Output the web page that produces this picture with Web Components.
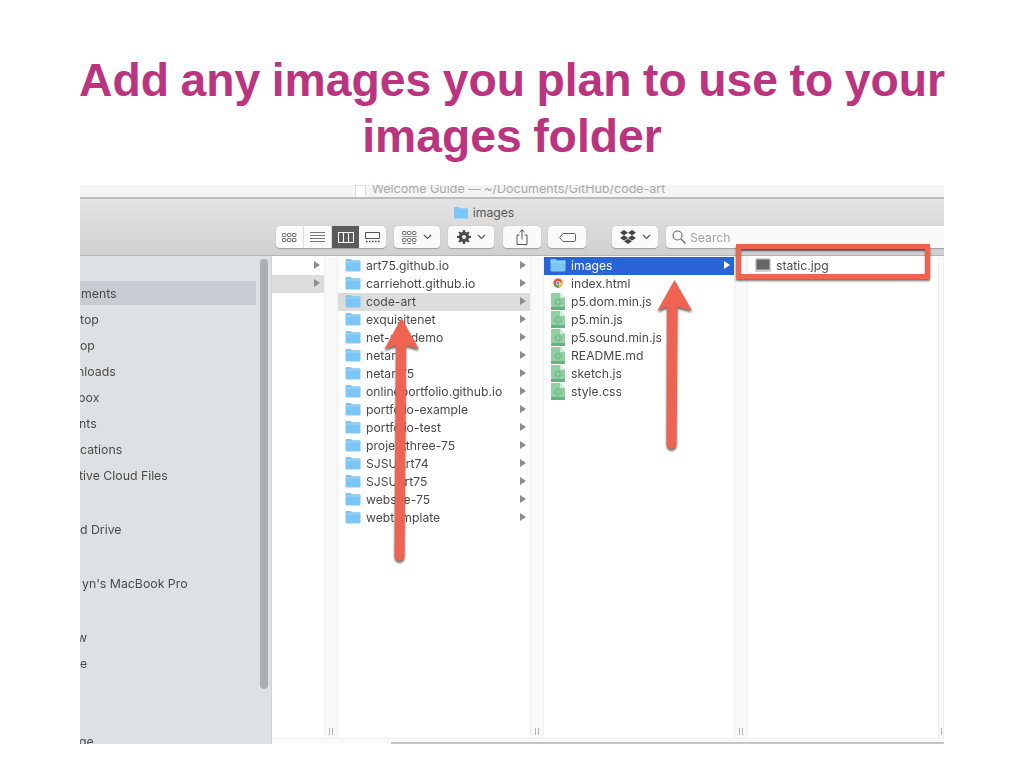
<!DOCTYPE html>
<html lang="en">
<head>
<meta charset="utf-8">
<title>Add any images</title>
<style>
  html, body { margin: 0; padding: 0; background: #fff; }
  body { width: 1024px; height: 768px; overflow: hidden; font-family: "Inter", "Liberation Sans", sans-serif; }
</style>
</head>
<body>
<slide-page>
  <slide-title slot="title">Add any images you plan to use to your images folder</slide-title>
  <finder-window>
    <finder-sidebar slot="sidebar">
      <side-item active pad="1">ments</side-item>
      <side-item pad="0">top</side-item>
      <side-item pad="0">op</side-item>
      <side-item pad="-3">nloads</side-item>
      <side-item pad="-2">box</side-item>
      <side-item pad="-1">nts</side-item>
      <side-item pad="0">cations</side-item>
      <side-item pad="-1">tive Cloud Files</side-item>
      <side-item gap="28" pad="0">d Drive</side-item>
      <side-item gap="28" pad="2">yn's MacBook Pro</side-item>
      <side-item gap="28" pad="-3">w</side-item>
      <side-item pad="0">e</side-item>
      <side-item gap="52" pad="-1">ge</side-item>
    </finder-sidebar>

    <finder-column slot="columns" size="52" divider="14">
      <finder-row arrow></finder-row>
      <finder-row arrow current></finder-row>
    </finder-column>
    <finder-column slot="columns" size="192" divider="14">
      <finder-row icon="folder" arrow>art75.github.io</finder-row>
      <finder-row icon="folder" arrow>carriehott.github.io</finder-row>
      <finder-row icon="folder" arrow current>code-art</finder-row>
      <finder-row icon="folder" arrow>exquisitenet</finder-row>
      <finder-row icon="folder" arrow>net-art-demo</finder-row>
      <finder-row icon="folder" arrow>netart</finder-row>
      <finder-row icon="folder" arrow>netart75</finder-row>
      <finder-row icon="folder" arrow>onlineportfolio.github.io</finder-row>
      <finder-row icon="folder" arrow>portfolio-example</finder-row>
      <finder-row icon="folder" arrow>portfolio-test</finder-row>
      <finder-row icon="folder" arrow>projectthree-75</finder-row>
      <finder-row icon="folder" arrow>SJSUArt74</finder-row>
      <finder-row icon="folder" arrow>SJSUart75</finder-row>
      <finder-row icon="folder" arrow>website-75</finder-row>
      <finder-row icon="folder" arrow>webtemplate</finder-row>
    </finder-column>
    <finder-column slot="columns" size="190" divider="14">
      <finder-row icon="folder" arrow selected indent="6">images</finder-row>
      <finder-row icon="chrome" indent="6">index.html</finder-row>
      <finder-row icon="code" indent="6">p5.dom.min.js</finder-row>
      <finder-row icon="code" indent="6">p5.min.js</finder-row>
      <finder-row icon="code" indent="6">p5.sound.min.js</finder-row>
      <finder-row icon="code" indent="6">README.md</finder-row>
      <finder-row icon="code" indent="6">sketch.js</finder-row>
      <finder-row icon="code" indent="6">style.css</finder-row>
    </finder-column>
    <finder-column slot="columns" size="190" divider="6">
      <finder-row icon="image" indent="7">static.jpg</finder-row>
    </finder-column>
  </finder-window>
</slide-page>

<script>
  const ICONS = {
    folder: `<svg width="16" height="14" viewBox="0 0 16 14"><path d="M.5 2.2C.5 1.4 1 1 1.7 1h3.6c.6 0 .8.2 1.1.6l.5.7h7.5c.7 0 1.1.4 1.1 1.1v8.9c0 .7-.4 1.2-1.1 1.2H1.6c-.7 0-1.1-.5-1.1-1.2z" fill="#7cc6f6"/><path d="M.5 3.6h15v.8H.5z" fill="#a8dafa"/></svg>`,
    chrome: `<svg width="16" height="16" viewBox="0 0 16 16"><rect x="0" y="0" width="16" height="16" rx="2" fill="#fafafa"/><circle cx="8" cy="8" r="4.6" fill="#e0523f"/><path d="M8 8 3.9 10a4.6 4.6 0 0 0 5.5 2.4z" fill="#5aa960"/><path d="M8 8l4.4-1.4a4.6 4.6 0 0 1-3 5.8z" fill="#efc63e"/><circle cx="8" cy="8" r="2.1" fill="#fff"/><circle cx="8" cy="8" r="1.5" fill="#4f86d8"/></svg>`,
    code: `<svg width="14" height="17" viewBox="0 0 14 17"><path d="M0 1c0-.6.4-1 1-1h8l5 5v11c0 .6-.4 1-1 1H1c-.6 0-1-.4-1-1z" fill="#93cfa4"/><path d="M9 0l5 5H9z" fill="#cfeAd6"/><path d="M0 14h14v2c0 .6-.4 1-1 1H1c-.6 0-1-.4-1-1z" fill="#66b380"/><ellipse cx="7" cy="9" rx="4.2" ry="2" fill="none" stroke="#6fb487" stroke-width=".7"/><ellipse cx="7" cy="9" rx="2" ry="4.2" fill="none" stroke="#6fb487" stroke-width=".7"/></svg>`,
    image: `<svg width="16" height="14" viewBox="0 0 16 14"><rect width="16" height="14" rx="1.5" fill="#cfcfcf"/><rect x="1.5" y="1.5" width="13" height="10" fill="#666"/></svg>`
  };

  class SlidePage extends HTMLElement {
    constructor() {
      super();
      this.attachShadow({ mode: 'open' });
      this.shadowRoot.innerHTML = `
        <style>
          :host { display: flex; flex-direction: column; width: 1024px; height: 768px; padding: 52px 80px 0; box-sizing: border-box; position: relative; }
          #gap { height: 21px; flex: none; }
          svg { position: absolute; left: 0; top: 0; pointer-events: none; filter: drop-shadow(0 2px 1.2px rgba(0,0,0,.6)); }
          #box { position: absolute; left: 736px; top: 244px; width: 184px; height: 25px; border: 5px solid #ee6352; box-shadow: 0 2px 2px rgba(0,0,0,.55), inset 0 2px 2px rgba(0,0,0,.6); }
        </style>
        <slot name="title"></slot>
        <div id="gap"></div>
        <slot></slot>
        <svg width="1024" height="768">
          <path d="M401.5 318 419 349 406 345.5 404.5 556a4.5 4.5 0 0 1-10 0L396 345.5 384.5 349z" fill="#ee6352"/>
          <path d="M674.5 280 692 310.5 677.5 307 676.5 444a4.5 4.5 0 0 1-10 0L667 307 657.5 310.5z" fill="#ee6352"/>
        </svg>
        <div id="box"></div>
      `;
    }
  }

  class SlideTitle extends HTMLElement {
    constructor() {
      super();
      this.attachShadow({ mode: 'open' });
      this.shadowRoot.innerHTML = `
        <style>
          :host { display: block; margin: 0 -30px; font: bold 46.3px/56px "Liberation Sans", Arial, sans-serif; word-spacing: -1.4px; color: #bb3480; text-align: center; }
        </style>
        <slot></slot>
      `;
    }
  }

  class FinderWindow extends HTMLElement {
    constructor() {
      super();
      this.attachShadow({ mode: 'open' });
      this.shadowRoot.innerHTML = `
        <style>
          :host { display: flex; flex-direction: column; width: 864px; height: 559px; overflow: hidden; flex: none; filter: blur(.55px); font: 12.2px "Inter", "Liberation Sans", sans-serif; color: #484848; }
          #body { display: flex; flex: 1; min-height: 0; }
          #columns { display: flex; flex-direction: column; flex: 1; min-width: 0; }
          #list { display: flex; flex: 1; min-height: 0; padding-top: 1px; background: #fff; }
          #hscroll { height: 6px; flex: none; box-sizing: border-box; border-top: 1px solid #f0f0f0; background: #fafafa; padding: 3px 0 0 119px; }
          #hscroll div { height: 2px; background: #c6c6c6; }
        </style>
        <finder-toolbar></finder-toolbar>
        <div id="body">
          <slot name="sidebar"></slot>
          <div id="columns">
            <div id="list"><slot name="columns"></slot></div>
            <div id="hscroll"><div></div></div>
          </div>
        </div>
      `;
    }
  }

  class FinderToolbar extends HTMLElement {
    constructor() {
      super();
      this.attachShadow({ mode: 'open' });
      const dot = (x, y) => `<rect x="${x}" y="${y}" width="3.4" height="3" rx=".5" fill="none" stroke="#555" stroke-width=".8"/>`;
      const grid = [0, 5, 10].flatMap(x => [0, 5].map(y => dot(x + .5, y + .5))).join('');
      const chevron = `<svg class="chev" width="9" height="6" viewBox="0 0 9 6"><path d="M1 1l3.5 3.5L8 1" fill="none" stroke="#555" stroke-width="1.2"/></svg>`;
      this.shadowRoot.innerHTML = `
        <style>
          :host { display: block; flex: none; height: 71px; box-sizing: border-box; border-bottom: 1px solid #b4b4b4; background: linear-gradient(#eeeeee, #e4e4e4 20%, #d0d0d0); }
          #tab { height: 14px; box-sizing: border-box; background: #f4f4f4; border-bottom: 2px solid #bcbcbc; display: flex; justify-content: center; gap: 6px; align-items: center; color: #a9a9a9; font-size: 12.5px; overflow: hidden; line-height: 14px; padding-right: 4px; }
          #tab i { display: block; width: 11px; height: 13px; background: #fff; border: 1px solid #dedede; box-sizing: border-box; flex: none; }
          #tab span { position: relative; top: -2px; }
          #name { height: 27px; display: flex; align-items: center; justify-content: center; gap: 4px; color: #555; padding-right: 57px; }
          #bar { display: flex; align-items: center; height: 22px; padding-left: 196px; }
          .btn { height: 22px; box-sizing: border-box; background: #fafafa; border-radius: 4px; box-shadow: 0 .5px 1px rgba(0,0,0,.25); display: flex; align-items: center; justify-content: center; gap: 6px; flex: none; }
          .seg { display: flex; overflow: hidden; width: 110px; margin-right: 8px; gap: 0; }
          .seg div { flex: 1; height: 22px; display: flex; align-items: center; justify-content: center; border-right: 1px solid #dcdcdc; box-sizing: border-box; }
          .seg div:last-child { border-right: 0; }
          .seg .on { background: #5b5b5b; border-right: 0; }
          #arrange { width: 46px; margin-right: 8px; }
          #action { width: 46px; margin-right: 9px; }
          #share { width: 38px; margin-right: 7px; }
          #tag { width: 38px; margin-right: 26px; }
          #drop { width: 46px; margin-right: 8px; }
          #search { flex: 1; justify-content: flex-start; padding-left: 6px; color: #a3a3a3; gap: 4px; border-radius: 4px 0 0 4px; }
        </style>
        <div id="tab"><i></i><span>Welcome Guide — ~/Documents/GitHub/code-art</span></div>
        <div id="name">
          <svg width="16" height="13" viewBox="0 0 16 14"><path d="M.5 2.2C.5 1.4 1 1 1.7 1h3.6c.6 0 .8.2 1.1.6l.5.7h7.5c.7 0 1.1.4 1.1 1.1v8.9c0 .7-.4 1.2-1.1 1.2H1.6c-.7 0-1.1-.5-1.1-1.2z" fill="#7cc6f6"/></svg>
          <span>images</span>
        </div>
        <div id="bar">
          <div class="btn seg">
            <div><svg width="15" height="9" viewBox="0 0 15 9">${grid}</svg></div>
            <div><svg width="15" height="11" viewBox="0 0 15 11"><path d="M0 .5h15M0 3.5h15M0 6.5h15M0 9.5h15" stroke="#666" stroke-width=".9"/></svg></div>
            <div class="on"><svg width="16" height="11" viewBox="0 0 16 11"><path d="M.5.5h15v10H.5zM5.5.5v10M10.5.5v10" fill="none" stroke="#fff" stroke-width="1.1"/></svg></div>
            <div><svg width="15" height="11" viewBox="0 0 15 11"><path d="M.5.5h14v6H.5z" fill="none" stroke="#555"/><path d="M1 9.5h1.6M4 9.5h1.6M7 9.5h1.6M10 9.5h1.6M13 9.5h1.6" stroke="#555" stroke-width="1.4"/></svg></div>
          </div>
          <div class="btn" id="arrange"><svg width="15" height="13" viewBox="0 0 15 13">${[0, 5, 10].map(x => dot(x + .5, .5)).join('')}<path d="M0 5.5h15" stroke="#777" stroke-width=".8"/><g transform="translate(0 7)">${grid}</g></svg>${chevron}</div>
          <div class="btn" id="action"><svg width="14" height="14" viewBox="0 0 14 14"><path d="M6 0h2l.3 2 1.4.6L11.4 1.4l1.2 1.2-1.2 1.7.6 1.4 2 .3v2l-2 .3-.6 1.4 1.2 1.7-1.2 1.2-1.7-1.2-1.4.6-.3 2H6l-.3-2-1.4-.6-1.7 1.2-1.2-1.2 1.2-1.7L2 8.3 0 8V6l2-.3.6-1.4-1.2-1.7 1.2-1.2 1.7 1.2 1.4-.6z" fill="#4c4c4c"/><circle cx="7" cy="7" r="2" fill="#f5f5f5"/></svg>${chevron}</div>
          <div class="btn" id="share"><svg width="12" height="16" viewBox="0 0 12 16"><path d="M3.5 6H1v9.5h10V6H8.5M6 10.5V1M3.5 3.2 6 .8l2.500 2.400" fill="none" stroke="#555" stroke-width="1"/></svg></div>
          <div class="btn" id="tag"><svg width="17" height="9" viewBox="0 0 17 9"><path d="M4 .5h11.5c.6 0 1 .4 1 1v6c0 .6-.4 1-1 1H4L.7 4.5z" fill="none" stroke="#666"/></svg></div>
          <div class="btn" id="drop"><svg width="16" height="14" viewBox="0 0 16 14"><path d="M4 0 0 2.7l4 2.6 4-2.600zM12 0 8 2.7l4 2.6 4-2.600zM0 7.900l4 2.600 4-2.600-4-2.600zM12 5.300 8 7.900l4 2.600 4-2.600zM4 11.300l4 2.700 4-2.700-4-2.600z" fill="#444"/></svg>${chevron}</div>
          <div class="btn" id="search"><svg width="14" height="14" viewBox="0 0 14 14"><circle cx="5.5" cy="5.5" r="4.5" fill="none" stroke="#666" stroke-width="1.1"/><path d="M9 9l4.500 4.500" stroke="#666" stroke-width="1.3"/></svg><span>Search</span></div>
        </div>
      `;
    }
  }

  class FinderSidebar extends HTMLElement {
    constructor() {
      super();
      this.attachShadow({ mode: 'open' });
      this.shadowRoot.innerHTML = `
        <style>
          :host { display: flex; flex: none; width: 192px; box-sizing: border-box; background: #dde1e4; border-right: 1px solid #cfd2d4; position: relative; overflow: hidden; }
          #items { flex: 1; padding-top: 25px; min-width: 0; }
          #track { width: 15px; flex: none; padding: 3px 3px 0 4px; box-sizing: border-box; }
          #thumb { height: 430px; background: #a9afb2; border-radius: 4px; }
        </style>
        <div id="items"><slot></slot></div>
        <div id="track"><div id="thumb"></div></div>
      `;
    }
  }

  class SideItem extends HTMLElement {
    constructor() {
      super();
      this.attachShadow({ mode: 'open' });
      this.shadowRoot.innerHTML = `
        <style>
          :host { display: block; height: 26px; line-height: 25px; white-space: nowrap; color: #4a4a4a; font-size: 12.3px; }
          :host([active]) { background: #c8cdd4; height: 24px; line-height: 26px; margin-bottom: 2px; }
        </style>
        <slot></slot>
      `;
    }
    connectedCallback() {
      this.style.marginTop = (this.getAttribute('gap') || 0) + 'px';
      const pad = Number(this.getAttribute('pad') || 0);
      if (pad < 0) this.style.marginLeft = pad + 'px';
      else this.style.paddingLeft = pad + 'px';
    }
  }

  class FinderColumn extends HTMLElement {
    constructor() {
      super();
      this.attachShadow({ mode: 'open' });
      this.shadowRoot.innerHTML = `
        <style>
          :host { display: flex; flex: none; }
          #rows { flex: 1; min-width: 0; }
          #handle { flex: none; box-sizing: border-box; background: #f9f9f9; border-left: 1px solid #efefef; border-right: 1px solid #efefef; display: flex; align-items: flex-end; justify-content: center; padding-bottom: 3px; gap: 2px; }
          #handle i { display: block; width: 1px; height: 7px; background: #b5b5b5; }
        </style>
        <div id="rows"><slot></slot></div>
        <div id="handle"><i></i><i></i></div>
      `;
    }
    connectedCallback() {
      const divider = Number(this.getAttribute('divider'));
      this.style.width = (Number(this.getAttribute('size')) + divider) + 'px';
      this.shadowRoot.querySelector('#handle').style.width = divider + 'px';
      if (divider < 10) this.shadowRoot.querySelector('#handle').innerHTML = '<i></i>';
    }
  }

  class FinderRow extends HTMLElement {
    constructor() {
      super();
      this.attachShadow({ mode: 'open' });
      this.shadowRoot.innerHTML = `
        <style>
          :host { display: flex; align-items: center; height: 18px; padding: 0 4px 0 7px; box-sizing: border-box; white-space: nowrap; color: #4a4a4a; }
          :host([current]) { background: #dcdcdc; }
          :host([selected]) { background: #2a62d8; color: #fff; }
          #icon { width: 16px; height: 18px; display: flex; align-items: center; justify-content: center; flex: none; margin-right: 5px; position: relative; top: -1px; }
          #label { flex: 1; min-width: 0; position: relative; top: -1px; }
          #arrow { width: 0; height: 0; border-left: 6px solid #8c8c8c; border-top: 4px solid transparent; border-bottom: 4px solid transparent; flex: none; display: none; position: relative; top: -1px; }
          :host([arrow]) #arrow { display: block; }
          :host([selected]) #arrow { border-left-color: #fff; }
        </style>
        <span id="icon"></span>
        <span id="label"><slot></slot></span>
        <span id="arrow"></span>
      `;
    }
    connectedCallback() {
      const icon = this.getAttribute('icon');
      const holder = this.shadowRoot.querySelector('#icon');
      if (icon) holder.innerHTML = ICONS[icon];
      else holder.style.display = 'none';
      if (this.hasAttribute('indent')) this.style.paddingLeft = this.getAttribute('indent') + 'px';
    }
  }

  customElements.define('finder-row', FinderRow);
  customElements.define('finder-column', FinderColumn);
  customElements.define('side-item', SideItem);
  customElements.define('finder-sidebar', FinderSidebar);
  customElements.define('finder-toolbar', FinderToolbar);
  customElements.define('finder-window', FinderWindow);
  customElements.define('slide-title', SlideTitle);
  customElements.define('slide-page', SlidePage);
</script>
</body>
</html>
